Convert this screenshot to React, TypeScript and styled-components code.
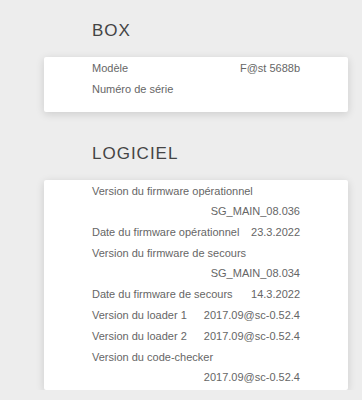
import styled, { createGlobalStyle } from 'styled-components'

const GlobalStyle = createGlobalStyle`
  html, body {
    margin: 0;
    background: #ededed;
  }
`

const font = `"Liberation Sans", Arimo, Arial, Helvetica, sans-serif`

type Item = { label: string; value: string }

const box: Item[] = [
  { label: 'Modèle', value: 'F@st 5688b' },
  { label: 'Numéro de série', value: '' },
]

const software: Item[] = [
  { label: 'Version du firmware opérationnel', value: 'SG_MAIN_08.036' },
  { label: 'Date du firmware opérationnel', value: '23.3.2022' },
  { label: 'Version du firmware de secours', value: 'SG_MAIN_08.034' },
  { label: 'Date du firmware de secours', value: '14.3.2022' },
  { label: 'Version du loader 1', value: '2017.09@sc-0.52.4' },
  { label: 'Version du loader 2', value: '2017.09@sc-0.52.4' },
  { label: 'Version du code-checker', value: '2017.09@sc-0.52.4' },
]

function App() {
  return (
    <>
      <GlobalStyle />
      <Page>
        <Section>
          <Title>BOX</Title>
          <Card $bottom={13}>
            {box.map(item => (
              <Row key={item.label}>
                <Label>{item.label}</Label>
                <Value>{item.value}</Value>
              </Row>
            ))}
          </Card>
        </Section>
        <Section>
          <Title>LOGICIEL</Title>
          <Card $bottom={3}>
            {software.map(item => (
              <Row key={item.label}>
                <Label>{item.label}</Label>
                <Value>{item.value}</Value>
              </Row>
            ))}
          </Card>
        </Section>
      </Page>
    </>
  )
}

const Page = styled.div`
  padding: 21px 14px 0 44px;
  display: flex;
  flex-direction: column;
  gap: 32px;
  font-family: ${font};
`
const Section = styled.section`
  display: flex;
  flex-direction: column;
  gap: 16px;
`
const Title = styled.h2`
  margin: 0;
  padding-left: 48px;
  font-family: ${font};
  font-size: 17px;
  line-height: 20px;
  font-weight: normal;
  letter-spacing: 1px;
  color: #444;
`
const Card = styled.div<{ $bottom: number }>`
  width: 304px;
  box-sizing: border-box;
  background: #fff;
  border-radius: 2px;
  box-shadow: 0 2px 8px rgba(0, 0, 0, 0.14);
  padding: 1px 48px ${p => p.$bottom}px;
  display: flex;
  flex-direction: column;
  gap: 1px;
`
const Row = styled.div`
  display: flex;
  flex-wrap: wrap;
  justify-content: space-between;
  column-gap: 4px;
  font-family: ${font};
  font-size: 11px;
  line-height: 20px;
  color: #666;
`
const Label = styled.span``
const Value = styled.span`
  margin-left: auto;
`

export default App
